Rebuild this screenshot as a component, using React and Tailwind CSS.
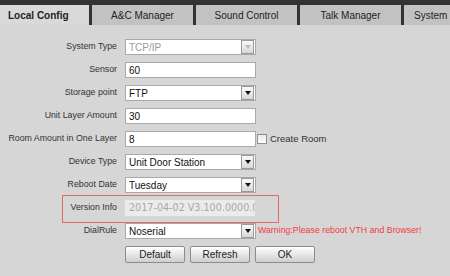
const tabs = ['A&C Manager', 'Sound Control', 'Talk Manager']

function Arrow({ disabled }) {
  return (
    <div className="flex h-[14px] w-[13px] shrink-0 items-center justify-center border border-[#9a9a9a] bg-gradient-to-b from-[#fafafa] to-[#d8d8d8]">
      <div
        className={
          'h-0 w-0 border-x-[3px] border-t-[4px] border-x-transparent ' +
          (disabled ? 'border-t-[#bdbdbd]' : 'border-t-[#111]')
        }
      />
    </div>
  )
}

function Select({ value, disabled }) {
  return (
    <div className="flex h-[16px] w-[131px] items-center border border-[#a9a9a9] bg-white pr-px">
      <span className={'flex-1 truncate pl-[3px] text-[10px] ' + (disabled ? 'text-[#9a9a9a]' : 'text-[#111]')}>{value}</span>
      <Arrow disabled={disabled} />
    </div>
  )
}

function Field({ value }) {
  return (
    <div className="flex h-[16px] w-[131px] items-center border border-[#a9a9a9] bg-white pl-[3px] text-[10px] text-[#111]">
      {value}
    </div>
  )
}

function Row({ label, children }) {
  return (
    <div className="flex h-[16px] items-center">
      <div className="w-[118px] shrink-0 whitespace-nowrap pr-px text-right text-[8.8px] text-[#333]">{label}</div>
      <div className="ml-[7px] flex items-center">{children}</div>
    </div>
  )
}

function Btn({ children }) {
  return (
    <button className="h-[17px] w-[60px] rounded-[2px] border border-[#8c8c8c] bg-gradient-to-b from-[#ffffff] to-[#cfcfcf] text-[10px] text-[#222]">
      {children}
    </button>
  )
}

export default function App() {
  return (
    <div className="h-[276px] w-[450px] overflow-hidden bg-[#d6d6d6] font-['Liberation_Sans',Arial,sans-serif]">
      <div className="flex h-[25px] items-end gap-[3px] bg-[#333333]">
        <div className="flex h-[20px] w-[89px] shrink-0 items-center bg-[#d9d9d9] pl-[8px] text-[10px] font-bold text-[#222]">
          Local Config
        </div>
        {tabs.map((t) => (
          <div
            key={t}
            className="flex h-[20px] w-[101px] shrink-0 items-center justify-center bg-[#c2c2c2] text-[10px] text-[#222]"
          >
            {t}
          </div>
        ))}
        <div className="flex h-[20px] w-[46px] shrink-0 items-center overflow-hidden whitespace-nowrap bg-[#c2c2c2] pl-[10px] text-[10px] text-[#222]">
          System
        </div>
      </div>

      <div className="mt-[14px] flex flex-col gap-[7px]">
        <Row label="System Type">
          <Select value="TCP/IP" disabled />
        </Row>
        <Row label="Sensor">
          <Field value="60" />
        </Row>
        <Row label="Storage point">
          <Select value="FTP" />
        </Row>
        <Row label="Unit Layer Amount">
          <Field value="30" />
        </Row>
        <Row label="Room Amount in One Layer">
          <Field value="8" />
          <div className="ml-px h-[10px] w-[10px] border border-[#8f8f8f] bg-gradient-to-b from-[#e8e8e8] to-[#ffffff]" />
          <span className="ml-[3px] text-[9.5px] text-[#333]">Create Room</span>
        </Row>
        <Row label="Device Type">
          <Select value="Unit Door Station" />
        </Row>
        <Row label="Reboot Date">
          <Select value="Tuesday" />
        </Row>
        <div className="relative">
          <Row label="Version Info">
            <div className="flex h-[16px] w-[130px] items-center overflow-hidden whitespace-nowrap bg-[#ebebeb] pl-[4px] font-['DejaVu_Sans',sans-serif] text-[9.6px] text-[#a8a8a8]">
              2017-04-02 V3.100.0000.0
            </div>
          </Row>
          <div className="pointer-events-none absolute left-[62px] top-[-5px] h-[28px] w-[217px] border border-[#e06a6a]" />
        </div>
        <Row label="DialRule">
          <Select value="Noserial" />
          <span className="ml-[2px] whitespace-nowrap text-[8.8px] text-[#f23c3c]">Warning:Please reboot VTH and Browser!</span>
        </Row>
        <div className="flex gap-[5px] pl-[125px]">
          <Btn>Default</Btn>
          <Btn>Refresh</Btn>
          <Btn>OK</Btn>
        </div>
      </div>
    </div>
  )
}
